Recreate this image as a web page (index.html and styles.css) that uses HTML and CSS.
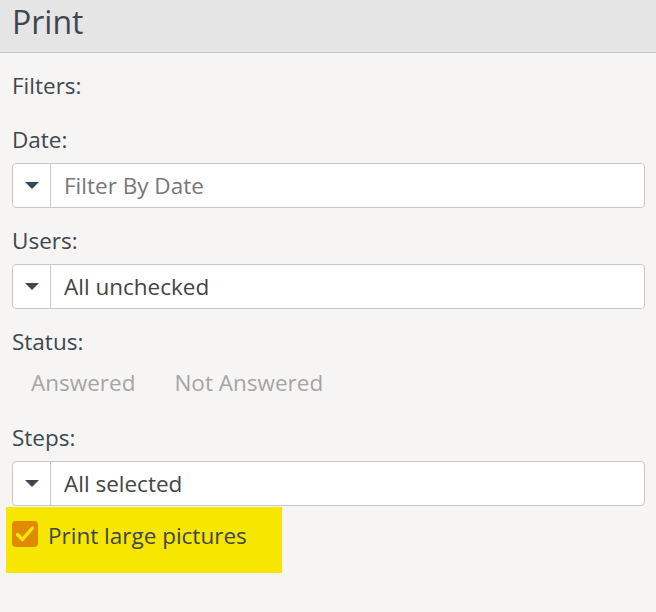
FILE: index.html
```html
<!DOCTYPE html>
<html>
<head>
<meta charset="utf-8">
<link rel="stylesheet" href="styles.css">
</head>
<body>
<div class="header"><h1 class="title">Print</h1></div>
<div class="content">
  <div class="section-label">Filters:</div>
  <div class="field-label date-label">Date:</div>
  <div class="select">
    <div class="select-toggle"><span class="caret"></span></div>
    <div class="select-value placeholder">Filter By Date</div>
  </div>
  <div class="field-label">Users:</div>
  <div class="select">
    <div class="select-toggle"><span class="caret"></span></div>
    <div class="select-value">All unchecked</div>
  </div>
  <div class="field-label">Status:</div>
  <div class="status-options">
    <span class="status-option">Answered</span>
    <span class="status-option">Not Answered</span>
  </div>
  <div class="field-label steps-label">Steps:</div>
  <div class="select">
    <div class="select-toggle"><span class="caret"></span></div>
    <div class="select-value">All selected</div>
  </div>
  <label class="check-row">
    <span class="checkbox">
      <svg width="20" height="18" viewBox="0 0 20 18"><path d="M2.5 9.5 L7.5 14.5 L17.5 3" fill="none" stroke="#f7e600" stroke-width="3.4" stroke-linecap="round" stroke-linejoin="round"/></svg>
    </span>
    <span class="check-text">Print large pictures</span>
  </label>
</div>
</body>
</html>
```
FILE: styles.css
```css
html, body {
  margin: 0;
  padding: 0;
}
body {
  background: #f6f5f3;
  font-family: "Open Sans", "Liberation Sans", sans-serif;
  color: #3d4750;
  width: 656px;
  height: 612px;
  overflow: hidden;
}
.header {
  height: 52px;
  background: #e5e5e5;
  border-bottom: 1px solid #c5c5c5;
  padding-left: 12px;
}
.title {
  margin: 0;
  font-weight: 400;
  font-size: 32px;
  line-height: 44px;
  color: #3d4750;
}
.content {
  padding: 0 11px 0 12px;
}
.section-label {
  font-size: 22.5px;
  line-height: 26px;
  margin-top: 20px;
}
.field-label {
  font-size: 22.5px;
  line-height: 26px;
  margin-top: 20px;
  margin-bottom: 10px;
}
.date-label {
  margin-top: 28px;
}
.select {
  display: flex;
  height: 43px;
  background: #fff;
  border: 1px solid #c9c9c9;
  border-radius: 4px;
}
.select-toggle {
  width: 37px;
  border-right: 1px solid #c9c9c9;
  display: flex;
  align-items: center;
  justify-content: center;
}
.caret {
  width: 0;
  height: 0;
  border-left: 7px solid transparent;
  border-right: 7px solid transparent;
  border-top: 7px solid #3d4750;
}
.select-value {
  flex: 1;
  display: flex;
  align-items: center;
  padding-left: 13px;
  font-size: 22.5px;
  color: #444;
}
.select-value.placeholder {
  color: #777;
}
.status-options {
  display: flex;
  gap: 39px;
  padding-left: 19px;
  font-size: 22.5px;
  line-height: 26px;
  color: #a5a5a5;
  margin-top: 15px;
}
.steps-label {
  margin-top: 29px;
}
.check-row {
  display: flex;
  align-items: flex-start;
  gap: 10px;
  width: 270px;
  height: 52px;
  padding-top: 14px;
  margin-top: 1px;
  margin-left: -6px;
  padding-left: 6px;
  background: #f7e600;
}
.checkbox {
  width: 26px;
  height: 26px;
  border-radius: 4px;
  background: #e08a00;
  display: flex;
  align-items: center;
  justify-content: center;
}
.check-text {
  font-size: 22.5px;
  line-height: 26px;
  padding-top: 2px;
  color: #3d4750;
}
```
